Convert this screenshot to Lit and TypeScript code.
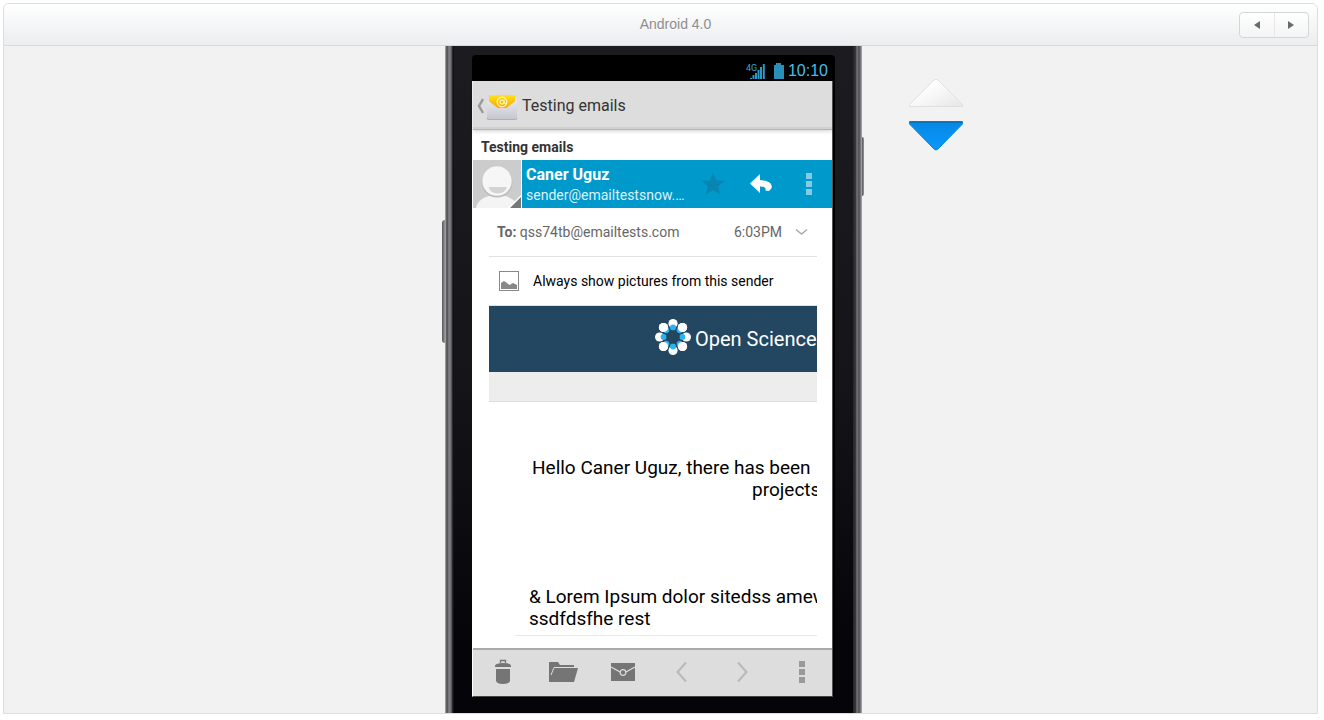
import { LitElement, html, css, svg } from "lit";
import { customElement, property } from "lit/decorators.js";

const petals = [0, 1, 2, 3, 4, 5, 6, 7].map((i) => {
  const a = (i * Math.PI) / 4;
  return { x: 18 + Math.sin(a) * 13.4, y: 18 - Math.cos(a) * 13.4, bx: 18 + Math.sin(a) * 9.4, by: 18 - Math.cos(a) * 9.4 };
});

@customElement("scroll-arrows")
class ScrollArrows extends LitElement {
  static styles = css`
    :host { display: flex; flex-direction: column; gap: 13px; }
    button { display: block; padding: 0; border: 0; background: none; height: 30px; }
    svg { display: block; }
  `;
  render() {
    return html`
      <button aria-label="Scroll up"><svg width="56" height="30" viewBox="0 0 56 30">
        <defs><linearGradient id="u" x1="0" y1="0" x2="1" y2="1"><stop offset="0.3" stop-color="#fff"/><stop offset="1" stop-color="#e6e6e6"/></linearGradient></defs>
        <path d="M26 2Q28 0.5 30 2L54.5 26.500V28.500H1.500V26.500Z" fill="url(#u)" stroke="#e0e0e0"/>
      </svg></button>
      <button aria-label="Scroll down"><svg width="56" height="30" viewBox="0 0 56 30">
        <defs><linearGradient id="d" x1="0" y1="0" x2="0" y2="1"><stop offset="0" stop-color="#0688e4"/><stop offset="1" stop-color="#0b98fd"/></linearGradient></defs>
        <path d="M1.500 0.500H54.500V3L30 28Q28 30 26 28L1.500 3Z" fill="url(#d)" stroke="#0b84d8"/>
        <path d="M2 1.200H54" stroke="#0a73bd" stroke-width="1.500"/>
      </svg></button>
    `;
  }
}

@customElement("mail-screen")
class MailScreen extends LitElement {
  static styles = css`
    :host { display: flex; flex-direction: column; flex: 1; min-height: 0; background: #fff; color: #333; font-family: Roboto, sans-serif; border-left: 1px solid #fff; border-right: 1px solid #555; border-bottom: 1px solid #444; box-sizing: border-box; }
    svg { display: block; }
    button { border: 0; padding: 0; background: none; font: inherit; color: inherit; display: grid; place-items: center; }
    h1, h2, p { margin: 0; font-size: 16px; font-weight: 400; }
    .bar { display: flex; align-items: center; height: 49px; flex: none; box-sizing: border-box; background: #ddd; border-bottom: 1px solid #b4b4b4; padding: 2px 0 0 3px; box-shadow: inset 0 -2px #d0d0d0, 0 1px 4px rgba(0, 0, 0, 0.2); }
    .bar h1 { padding-left: 4px; line-height: 24px; }
    .mailicon { margin-left: 2px; }
    h2 { font-size: 14px; font-weight: 700; line-height: 26px; padding: 4px 0 0 8px; flex: none; }
    .sender { display: flex; height: 48px; flex: none; background: #09c; color: #fff; }
    .avatar { border-right: 1px solid #fff; }
    .who { flex: 1; min-width: 0; padding-left: 4px; white-space: nowrap; }
    .name { font-weight: 700; line-height: 20px; padding-top: 5px; }
    .mail { font-size: 14px; line-height: 20px; color: #dff2f9; }
    .acts { display: flex; gap: 2px; flex: none; }
    .acts button { width: 46px; }
    .sheet { flex: 1; min-height: 0; padding: 0 15px 0 16px; overflow: hidden; }
    .row { display: flex; align-items: center; height: 48px; border-bottom: 1px solid #e2e2e2; font-size: 14px; color: #666; padding: 0 9px 0 8px; }
    .to { flex: 1; }
    .chev { margin-left: 13px; }
    .always { color: #000; gap: 13px; padding-left: 10px; width: 100%; box-sizing: border-box; }
    button.always { display: flex; height: 49px; border-bottom: 1px solid #e2e2e2; }
    .banner { display: flex; align-items: center; gap: 4px; height: 66px; padding-left: 166px; background: #234761; color: #fff; font-size: 20px; white-space: nowrap; overflow: hidden; }
    .banner svg { flex: none; padding-bottom: 4px; }
    .strip { height: 29px; background: #ededed; border-bottom: 1px solid #ddd; }
    .copy { font-size: 19px; line-height: 22px; color: #000; white-space: nowrap; overflow: hidden; }
    .hello { padding: 55px 0 0 43px; }
    .more { padding-left: 220px; }
    .lorem { margin: 85px 0 0 26px; padding: 0 0 5px 14px; border-bottom: 1px solid #e8e8e8; }
    .tools { display: flex; justify-content: space-between; height: 48px; flex: none; box-sizing: border-box; border-top: 2px solid #aaa; background: #ddd; padding-bottom: 2px; }
    .tools button { flex: 1; }
  `;

  dots(color: string) {
    return svg`<svg width="8" height="24" viewBox="0 0 8 24" fill=${color}><path d="M1 1h6v6H1zM1 9h6v6H1zM1 17h6v6H1z"/></svg>`;
  }

  render() {
    return html`
      <header class="bar">
        <button aria-label="Back"><svg width="8" height="16" viewBox="0 0 8 16"><path d="M7 1L3 8L7 15" fill="none" stroke="#999" stroke-width="2.400"/></svg></button>
        <svg class="mailicon" width="32" height="32" viewBox="0 0 32 32">
          <defs>
            <linearGradient id="y" x1="0" y1="0" x2="0" y2="1"><stop offset="0" stop-color="#ffe21a"/><stop offset="1" stop-color="#f9a800"/></linearGradient>
            <linearGradient id="e" x1="0" y1="0" x2="0" y2="1"><stop offset="0" stop-color="#e8e8ee"/><stop offset="1" stop-color="#c5c5d0"/></linearGradient>
          </defs>
          <path d="M1 12L16 2L31 12V20H1Z" fill="#e7d7cf"/>
          <path d="M3 5H29V18H3Z" fill="url(#y)"/>
          <path d="M1 10L16 21L31 10V28Q31 29.500 29.500 29.500H2.500Q1 29.500 1 28Z" fill="url(#e)"/>
          <path d="M1 28Q1 29.500 2.500 29.500H29.500Q31 29.500 31 28" stroke="#adadb8" fill="none"/>
          <circle cx="16" cy="12" r="4.800" fill="none" stroke="#fff6c0" stroke-width="1.200"/>
          <circle cx="16" cy="12" r="2" fill="none" stroke="#fff6c0" stroke-width="1.200"/>
          <path d="M18 10V13Q19.500 15 20.700 12" stroke="#fff6c0" fill="none"/>
        </svg>
        <h1>Testing emails</h1>
      </header>
      <h2>Testing emails</h2>
      <section class="sender">
        <svg class="avatar" width="48" height="48" viewBox="0 0 48 48">
          <rect width="48" height="48" fill="#ccc"/>
          <ellipse cx="24" cy="49" rx="21" ry="14" fill="#f4f4f4"/>
          <circle cx="24" cy="22" r="15.500" fill="#bdbdbd"/>
          <circle cx="24" cy="21" r="14.700" fill="#f6f6f6"/>
          <path d="M15.500 27H34Q32 33.500 24.800 33.500T15.500 27Z" fill="#d3d3d3"/>
          <path d="M48 35V48H35Z" fill="#fff"/><path d="M48 37V48H37Z" fill="#777"/>
        </svg>
        <div class="who"><p class="name">Caner Uguz</p><p class="mail">sender@emailtestsnow.…</p></div>
        <div class="acts">
          <button aria-label="Star"><svg width="24" height="24" viewBox="0 0 24 24"><path d="M12 0L15.200 8.500L24 8.700L17 14.300L19.500 23L12 18L4.500 23L7 14.300L0 8.700L8.800 8.500Z" fill="#0886b0"/></svg></button>
          <button aria-label="Reply"><svg width="24" height="24" viewBox="0 0 24 24"><path d="M1 11.500L11 2V8Q23 8.500 23 15Q22 17.500 20 19L16.500 18.500Q17.500 14.500 11 14.500V21Z" fill="#fff"/></svg></button>
          <button aria-label="More">${this.dots("#85cbe5")}</button>
        </div>
      </section>
      <main class="sheet">
        <div class="row"><span class="to"><b>To:</b> qss74tb@emailtests.com</span><span>6:03PM</span>
          <svg class="chev" width="13" height="8" viewBox="0 0 13 8"><path d="M1 1.500L6.500 6L12 1.500" fill="none" stroke="#aaa" stroke-width="1.500"/></svg></div>
        <button class="row always">
          <svg width="21" height="21" viewBox="0 0 21 21"><rect x="0.500" y="0.500" width="19" height="19" fill="#fff" stroke="#888"/><path d="M2 18V12L5 10L8 12L10.500 14L14 12L18 14V18Z" fill="#888"/></svg>
          <span>Always show pictures from this sender</span></button>
        <div class="banner">
          <svg width="36" height="36" viewBox="0 0 36 36">
            ${petals.map((p) => svg`<circle cx=${p.x} cy=${p.y} r="4.600" fill="#fff"/>`)}
            ${petals.map((p) => svg`<circle cx=${p.bx} cy=${p.by} r="3" fill="#2db2ee"/>`)}
            ${petals.filter((_, i) => i % 2).map((p) => svg`<circle cx=${p.x} cy=${p.y} r="4.600" fill="#fff"/>`)}
            <circle cx="18" cy="18" r="6.500" fill="#234761"/>
          </svg>
          <span>Open Science</span>
        </div>
        <div class="strip"></div>
        <p class="copy hello">Hello Caner Uguz, there has been<br /><span class="more">projects</span></p>
        <p class="copy lorem">&amp; Lorem Ipsum dolor sitedss amew<br />ssdfdsfhe rest</p>
      </main>
      <nav class="tools">
        <button aria-label="Delete"><svg width="30" height="28" viewBox="0 0 30 28"><path d="M12.500 5V2.500H17.500V5" fill="none" stroke="#757575" stroke-width="1.300"/><path d="M7 7.500Q8 5 15 5T23 7.500V9H7ZM8 11H22V23Q21 26 15 26T8 23Z" fill="#757575"/></svg></button>
        <button aria-label="Move"><svg width="30" height="24" viewBox="0 0 30 24"><path d="M1 2H10L12 5H26V8H30L26 22H1Z" fill="#757575"/><path d="M3 15L6 7.500H27" fill="none" stroke="#ddd"/></svg></button>
        <button aria-label="Mark unread"><svg width="26" height="20" viewBox="0 0 26 20"><rect x="1" y="1" width="24" height="18" fill="#757575"/><path d="M1 5L11 10.500M25 5L15 10.500" fill="none" stroke="#ddd" stroke-width="1.400"/><circle cx="13" cy="10.500" r="2.800" fill="#757575" stroke="#ddd" stroke-width="1.200"/></svg></button>
        <button aria-label="Newer"><svg width="12" height="22" viewBox="0 0 12 22"><path d="M10 1.500L1.500 11L10 20.500" fill="none" stroke="#bbb" stroke-width="2.400"/></svg></button>
        <button aria-label="Older"><svg width="12" height="22" viewBox="0 0 12 22"><path d="M2 1.500L10.500 11L2 20.500" fill="none" stroke="#bbb" stroke-width="2.400"/></svg></button>
        <button aria-label="More options">${this.dots("#999")}</button>
      </nav>
    `;
  }
}

@customElement("app-root")
class AppRoot extends LitElement {
  @property() device = "Android 4.0";

  static styles = css`
    :host { display: block; box-sizing: border-box; height: 100vh; padding: 3px 6px 6px 3px; background: #fff; font-family: "Liberation Sans", sans-serif; }
    .panel { height: 100%; box-sizing: border-box; display: flex; flex-direction: column; border: 1px solid #dcdedf; border-radius: 6px 6px 0 0; background: #f2f2f2; overflow: hidden; }
    .head { display: grid; grid-template-columns: 108px 1fr 70px; align-items: center; height: 42px; box-sizing: border-box; flex: none; border-bottom: 1px solid #d7dadc; background: linear-gradient(#fff, #ebedef); padding-right: 8px; }
    .title { margin: 0; padding-bottom: 2px; grid-column: 2; text-align: center; font-size: 14px; font-weight: 400; line-height: 20px; color: #8c8c8c; text-shadow: 0 1px #fff; }
    .pager { display: flex; height: 26px; box-sizing: border-box; border: 1px solid #d3d6d8; border-radius: 4px; background: linear-gradient(#fff, #f3f4f5); }
    .pager button { flex: 1; padding: 0; border: 0; background: none; display: grid; place-items: center; }
    .pager button + button { border-left: 1px solid #e6e8e9; }
    .stage { flex: 1; min-height: 0; display: grid; grid-template-columns: 1fr 417px 1fr; padding-right: 14px; }
    .phone { position: relative; display: flex; padding: 0 9px; background: linear-gradient(90deg, #b5b5b8, #47474c 2px, #85858a 4px, #6d6d72 6px, #111116 8px, #111116 9px, #111116 408px, #3c3c41 409px, #202025 410px, #77777c 412px, #4a4a4f 414px, #85858a 416px, #b5b5b8); }
    .key { position: absolute; background: linear-gradient(90deg, #555, #99999c); border-radius: 3px 0 0 3px; }
    .volume { left: -3px; top: 174px; width: 3px; height: 123px; }
    .power { right: -2px; top: 91px; width: 2px; height: 59px; border-radius: 0 2px 2px 0; }
    .body { flex: 1; min-width: 0; box-sizing: border-box; display: flex; padding: 9px 18px 16px; background: linear-gradient(#1b1b20, #141419 50%, #050509 90%); }
    .glass { flex: 1; min-width: 0; display: flex; flex-direction: column; padding-right: 2px; background: #000; border-radius: 4px 4px 0 0; }
    .status { display: flex; justify-content: flex-end; align-items: center; gap: 8px; height: 26px; padding: 5px 5px 0 0; box-sizing: border-box; color: #45bfe9; font-size: 16px; line-height: 20px; }
    .power-clock { display: flex; align-items: center; gap: 3px; }
    .arrows { justify-self: start; padding: 32px 0 0 46px; }
    svg { display: block; }
    .radio { font: 9px Roboto, sans-serif; fill: #2fa5d4; }
  `;

  render() {
    return html`
      <div class="panel">
        <header class="head">
          <h1 class="title">${this.device}</h1>
          <div class="pager">
            <button aria-label="Previous"><svg width="8" height="8" viewBox="0 0 8 8"><path d="M7 0V8L1 4Z" fill="#666b6f"/></svg></button>
            <button aria-label="Next"><svg width="8" height="8" viewBox="0 0 8 8"><path d="M1 0V8L7 4Z" fill="#666b6f"/></svg></button>
          </div>
        </header>
        <div class="stage">
          <div></div>
          <div class="phone">
            <i class="key volume"></i><i class="key power"></i>
            <div class="body"><div class="glass">
              <div class="status">
                <svg width="19" height="16" viewBox="0 0 19 16">
                  <path d="M4 15h2v1H4zM6.500 12h2v4h-2zM9 10h2v6H9zM11.500 7h2v9h-2zM14 4h2v12h-2zM16.800 1h2v15h-2z" fill="#2a9bc8"/>
                  <text class="radio" x="0" y="8">4G</text>
                </svg>
                <div class="power-clock">
                  <svg width="12" height="16" viewBox="0 0 12 16"><path d="M3 0H8V2H11V16H1V2H3Z" fill="#2990b9"/></svg>
                  <span>10:10</span>
                </div>
              </div>
              <mail-screen></mail-screen>
            </div></div>
          </div>
          <scroll-arrows class="arrows"></scroll-arrows>
        </div>
      </div>
    `;
  }
}
